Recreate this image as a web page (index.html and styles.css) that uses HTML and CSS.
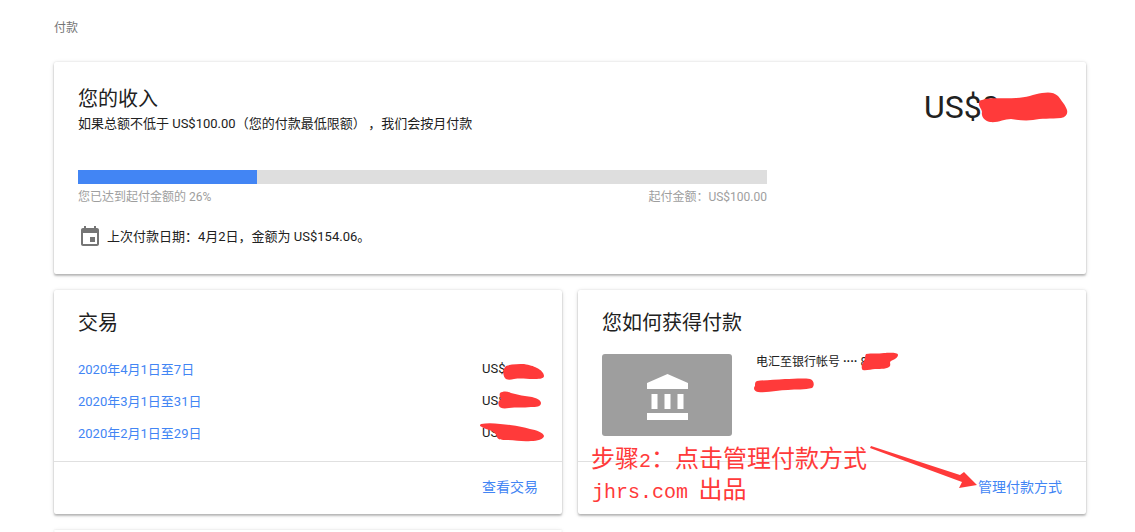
FILE: index.html
```html
<!DOCTYPE html>
<html lang="zh-CN">
<head>
<meta charset="utf-8">
<title>付款</title>
<link rel="stylesheet" href="styles.css">
</head>
<body>
<main class="page">
  <div class="crumb">付款</div>

  <section class="card earnings">
    <div class="earn-top">
      <div>
        <h2 class="title">您的收入</h2>
        <p class="sub">如果总额不低于 US$100.00（您的付款最低限额）&#8201;，我们会按月付款</p>
      </div>
      <div class="balance">US$0</div>
    </div>
    <div class="progress-wrap">
      <div class="track"><div class="fill" style="width:26%"></div></div>
      <div class="progress-labels"><span>您已达到起付金额的 26%</span><span>起付金额：US$100.00</span></div>
    </div>
    <div class="last-pay">
      <svg class="cal" viewBox="0 0 24 24" width="24" height="24"><path fill="#757575" d="M17 12h-5v5h5v-5zM16 1v2H8V1H6v2H5c-1.11 0-1.99.9-1.99 2L3 19c0 1.1.89 2 2 2h14c1.1 0 2-.9 2-2V5c0-1.1-.9-2-2-2h-1V1h-2zm3 18H5V8h14v11z"/></svg>
      <span>上次付款日期：4月2日，金额为 US$154.06。</span>
    </div>
  </section>

  <div class="two">
    <section class="card half">
      <div class="body">
        <h2 class="title">交易</h2>
        <ul class="tx">
          <li><a class="link">2020年4月1日至7日</a><span class="amt">US$</span></li>
          <li><a class="link">2020年3月1日至31日</a><span class="amt">US$</span></li>
          <li><a class="link">2020年2月1日至29日</a><span class="amt">US$</span></li>
        </ul>
      </div>
      <div class="foot"><a class="link foot-link">查看交易</a></div>
    </section>

    <section class="card half">
      <div class="body">
        <h2 class="title">您如何获得付款</h2>
        <div class="method">
          <div class="bank">
            <svg class="bank-icon" viewBox="0 0 41 46" width="41" height="46"><path fill="#fff" d="M0 15V9L20.5 0 41 9v6zM4.500 20h6v15h-6zM17.500 20h6v15h-6zM30.500 20h6v15h-6zM0 39h41v7H0z"/></svg>
          </div>
          <div class="method-text">电汇至银行帐号 <b class="dots">····</b> 8</div>
        </div>
      </div>
      <div class="foot"><a class="link foot-link">管理付款方式</a></div>
    </section>
  </div>

  <section class="card stub"></section>
</main>

<svg class="overlay" viewBox="0 0 1135 532" width="1135" height="532" aria-hidden="true">
  <g fill="#ff3a3a">
    <path d="M982 100c8-3 22-1 34-2 10 0 18-4 26-5 6-1 12-1 16 3 3 4 8 10 9 14 1 4-1 7-6 8-10 1-20 0-28 2-8 1-15 0-22-1-7 0-13 4-21 3-6-1-9-6-8-10 0-3-4-6-3-9 0-2 1-3 3-3z"/>
    <path d="M506 366c5-2 13-2 18-2 6 1 9 2 13 4 4 2 7 5 7 8 0 3-6 3-11 3-7 0-12-1-19 0-4 1-8 1-9-1-2-3-3-8 1-12z"/>
    <path d="M500 393c3-2 7-2 11 0 7 2 14 3 21 4 4 1 9 3 9 6 0 4-5 4-10 4-8 1-15 0-22 1-6 1-9 0-10-2-1-3-1-5 2-7-1-2-2-4-1-6z"/>
    <path d="M481 424c9-2 20 0 29 1 8 1 14 2 20 4 6 1 14 4 14 7s-7 5-13 5c-9 1-15-1-24-1-5 0-9 0-10-3-1-4-4-6-11-8-4-2-8-3-5-5z"/>
    <path d="M866 354c6-1 12 0 18-1 4 0 14-1 14 2 0 3-5 5-7 6-2 1 0 3-1 5-2 3-9 3-15 3-4 0-12 3-13 0-1-3 1-7 3-10 0-2 0-3 1-5z"/>
    <path d="M757 381c8-1 18-1 28-2 8 0 18-1 25 0 4 1 5 7 2 9-7 2-16 1-24 2-9 0-19 3-30 2-4-1-5-4-3-6 0-3 0-4 2-5z"/>
    <path d="M871 446L960 475 964 472 977 485 959 488 962 482 870 448z"/>
  </g>
</svg>
<div class="note step">步骤<span class="latin step-num">2</span>：点击管理付款方式</div>
<div class="note brand"><span class="latin brand-name">jhrs.com</span> 出品</div>
</body>
</html>
```
FILE: styles.css
```css
* { box-sizing: border-box; }
html, body { margin: 0; padding: 0; height: 532px; overflow: hidden; background: #fff; }
body { position: relative; font-family: Roboto, "Noto Sans CJK SC", sans-serif; color: #212121; font-size: 12px; }
.page { width: 1135px; height: 532px; padding: 19px 49px 0 54px; }
.crumb { height: 43px; line-height: 18px; color: #757575; font-size: 12px; }
.card { background: #fff; border-radius: 2px; box-shadow: 0 2px 2px 0 rgba(0,0,0,.2), 0 0 2px 0 rgba(0,0,0,.12), 0 1px 5px rgba(0,0,0,.12); }
.earnings { height: 212px; padding: 25px 24px 0; }
.earn-top { display: flex; justify-content: space-between; height: 83px; }
.title { margin: 0; font-size: 20px; font-weight: 400; line-height: 24px; color: #212121; }
.sub { margin: 5px 0 0; line-height: 16px; font-size: 13px; }
.balance { font-size: 32px; line-height: 40px; width: 138px; white-space: nowrap; }
.track { width: 689px; height: 14px; background: #dedede; }
.fill { height: 100%; background: #4285f4; }
.progress-labels { width: 689px; display: flex; justify-content: space-between; color: #9e9e9e; font-size: 12px; line-height: 16px; margin-top: 5px; }
.last-pay { display: flex; align-items: center; gap: 5px; margin-top: 20px; font-size: 13px; line-height: 24px; }
.cal { flex: none; }
.two { display: grid; grid-template-columns: 508px 508px; gap: 16px; margin-top: 16px; }
.half { height: 224px; display: flex; flex-direction: column; }
.body { flex: 1; padding: 21px 24px 0; }
.tx { list-style: none; margin: 17px 0 0; padding: 0; }
.tx li { display: flex; height: 32px; align-items: center; font-size: 13px; }
.amt { margin-left: auto; width: 56px; }
.link { color: #4285f4; font-size: 13px; }
.foot-link { font-size: 14px; }
.foot { height: 53px; border-top: 1px solid #e0e0e0; display: flex; align-items: center; justify-content: flex-end; padding: 0 24px 4px 0; }
.method { display: flex; gap: 24px; margin-top: 19px; }
.bank { width: 130px; height: 82px; background: #9e9e9e; border-radius: 3px; display: flex; align-items: center; justify-content: center; }
.bank-icon { margin-top: 4px; }
.method-text { font-size: 12px; line-height: 16px; }
.dots { font-weight: 700; }
.stub { width: 508px; height: 2px; margin-top: 16px; }
.overlay { position: absolute; left: 0; top: 0; pointer-events: none; }
.note { position: absolute; color: #ff3a3a; font-family: "Noto Sans CJK SC", sans-serif; font-size: 24px; line-height: 28px; white-space: nowrap; }
.latin { font-family: "Liberation Mono", monospace; font-size: 20px; }
.step-num { font-size: 20px; }
.brand-name { margin-right: 5px; }
.step { left: 591px; top: 443px; }
.brand { left: 592px; top: 474px; }
```
